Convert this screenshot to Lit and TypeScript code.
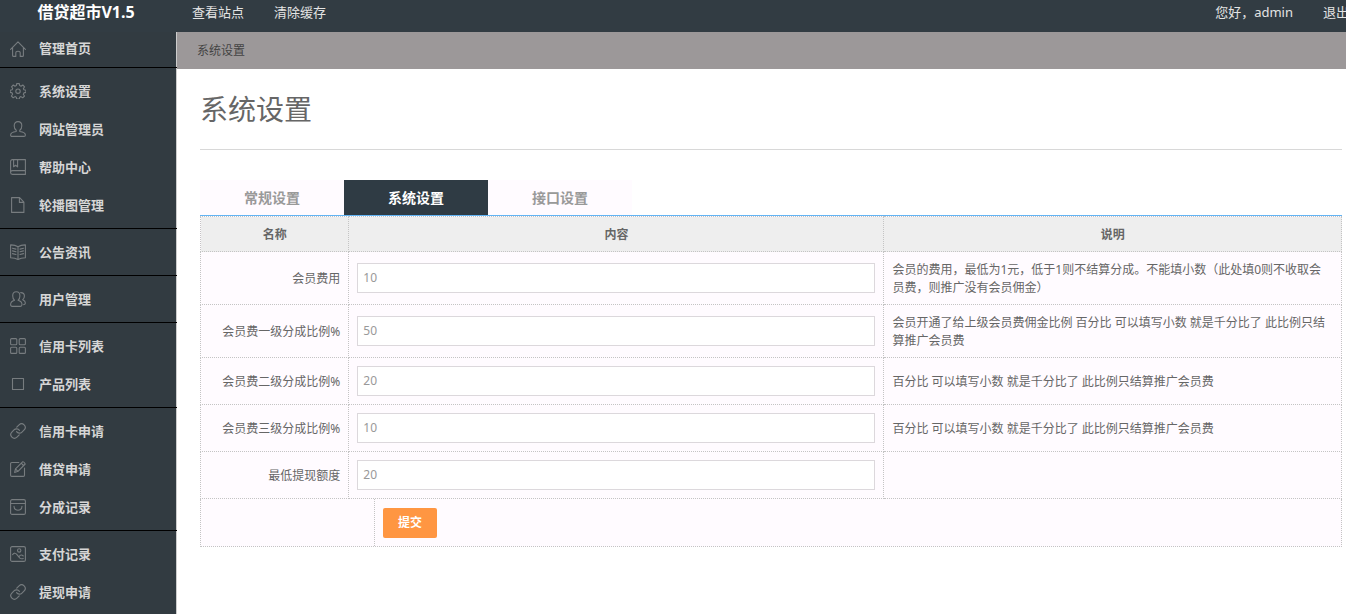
import { LitElement, html, svg, css, nothing } from "lit";
import { customElement, property } from "lit/decorators.js";
import { classMap } from "lit/directives/class-map.js";

const icons: Record<string, unknown> = {
  home: svg`<path d="M.6 8.4 8 .8l7.4 7.6M2.6 6.6v7.8q0 1 1 1h2.200v-3.600q0-1.600 2.200-1.600t2.200 1.600v3.600h2.200q1 0 1-1V6.600"/>`,
  gear: svg`<path d="M6.7.6h2.600l.4 2 1.300.6 1.800-1.200 1.800 1.800-1.200 1.800.5 1.200 2 .4v2.200l-2 .5-.6 1.300 1.200 1.800-1.800 1.800-1.800-1.200-1.200.6-.4 1.900H6.700l-.4-1.900-1.300-.6-1.800 1.200L1.400 13l1.200-1.800-.5-1.300-1.900-.5V7.200l1.900-.4.6-1.300-1.200-1.700 1.800-1.800L5 3.200l1.300-.6z"/><circle cx="8" cy="8.200" r="2.200"/>`,
  user: svg`<path d="M6.200 9.300C4.600 8.200 4.200 6.600 4.200 4.700 4.200 2.200 5.800.6 8 .6s3.800 1.600 3.800 4.100c0 1.900-.4 3.500-2 4.600v1.200c3.400.5 5.600 1.500 5.600 3.500 0 .9-.5 1.400-1.400 1.400H2c-.9 0-1.400-.5-1.400-1.400 0-2 2.200-3 5.600-3.500z"/>`,
  book: svg`<path d="M15.400.6H2.500Q.6.600.6 2.500v11q0 1.900 1.900 1.900h12.900zM.8 12.500q.5-.9 1.700-.9h12.900M3.600.8v7l2-1.600 2 1.600v-7"/>`,
  file: svg`<path d="M1.600.6h8l4.300 4.500v10.300H1.600zM9.400.8v4.600h4.300"/>`,
  news: svg`<path d="M8 2.800Q5 .8.600.9v12.800q4.400 0 7.400 1.800 3-1.800 7.400-1.800V.9Q11 .8 8 2.800zM8 2.800v12.500M2.500 4.200l3.500.9M2.500 6.900l3.500.9M2.500 9.600l3.500.9M13.500 4.200l-3.500.9M13.500 6.900l-3.500.9M13.500 9.600l-3.500.9"/>`,
  users: svg`<path d="M4.500 9.300C3 8.200 2.700 6.500 2.700 4.700 2.700 2.300 4.200.7 6.300.7s3.600 1.600 3.600 4c0 1.800-.3 3.500-1.800 4.600 2.700.8 3.900 2 3.900 4.300 0 1.100-.6 1.800-1.600 1.800H2.200C1.200 15.400.6 14.700.6 13.600c0-2.300 1.200-3.500 3.900-4.300zM10.700 1.600c2.400 0 3.700 1.300 3.700 3.400 0 1.700-.5 2.900-1.700 3.700 1.900.8 2.700 2 2.700 3.400 0 1-.6 1.500-1.700 1.500"/>`,
  grid: svg`<rect x=".6" y=".6" width="6.200" height="6.200" rx="1"/><rect x="9.200" y=".6" width="6.200" height="6.200" rx="1"/><rect x=".6" y="9.200" width="6.200" height="6.200" rx="1"/><rect x="9.200" y="9.200" width="6.200" height="6.200" rx="1"/>`,
  square: svg`<rect x="2.500" y="2.500" width="11" height="11"/>`,
  link: svg`<g transform="translate(-.64 -.64) scale(.72)" stroke-width="1.600"><path d="M10 13a5 5 0 0 0 7.540.54l3-3a5 5 0 0 0-7.070-7.070l-3.200 3.200"/><path d="M14 11a5 5 0 0 0-7.540-.54l-3 3a5 5 0 0 0 7.070 7.070l3.200-3.200"/></g>`,
  edit: svg`<path d="M8.800 1.500H1.800Q.6 1.500.6 2.700v11.500q0 1.200 1.200 1.200h11.500q1.200 0 1.200-1.200V7M4.600 11.400l.9-3.500L12.600.8q1.400-.5 2.600 2.200L8 10.300zM11.200 2.200l2.300 2.300M5.500 8l2.500 2.300"/>`,
  bag: svg`<rect x=".6" y=".6" width="14.800" height="14.800" rx="1.500"/><path d="M.8 4.500h14.400M4 7.200q.2 4 4 4t4-4"/>`,
  image: svg`<rect x=".6" y=".6" width="14.800" height="14.800" rx="1.500"/><circle cx="9.200" cy="4.400" r="1.700"/><path d="M2.600 8.600Q4.800 5.700 7 8.700l2.600 3.100q1.800 1.600 3.600.6M9.200 10.300Q11 8 13.300 10"/>`,
};

const groups: [string, string][][] = [
  [["home", "管理首页"]],
  [["gear", "系统设置"], ["user", "网站管理员"], ["book", "帮助中心"], ["file", "轮播图管理"]],
  [["news", "公告资讯"]],
  [["users", "用户管理"]],
  [["grid", "信用卡列表"], ["square", "产品列表"]],
  [["link", "信用卡申请"], ["edit", "借贷申请"], ["bag", "分成记录"]],
  [["image", "支付记录"], ["link", "提现申请"]],
];

const shareNote = "百分比 可以填写小数 就是千分比了 此比例只结算推广会员费";

const settings = [
  { id: "fee", label: "会员费用", value: "10", note: "会员的费用，最低为1元，低于1则不结算分成。不能填小数（此处填0则不收取会员费，则推广没有会员佣金）" },
  { id: "level1", label: "会员费一级分成比例%", value: "50", note: "会员开通了给上级会员费佣金比例 百分比 可以填写小数 就是千分比了 此比例只结算推广会员费" },
  { id: "level2", label: "会员费二级分成比例%", value: "20", note: shareNote },
  { id: "level3", label: "会员费三级分成比例%", value: "10", note: shareNote },
  { id: "withdraw", label: "最低提现额度", value: "20", note: "" },
];

const base = css`
  *, *::before, *::after { box-sizing: border-box; }
  a { color: inherit; text-decoration: none; }
  ul { list-style: none; margin: 0; padding: 0; }
`;

@customElement("side-menu")
class SideMenu extends LitElement {
  static styles = [base, css`
    :host { display: block; background: #323b41; border-right: 1px solid #ccc; color: #d6d6d6; }
    .group { position: relative; margin-right: -1px; padding: 4px 0; border-bottom: 1px solid #000; }
    .group:first-child { padding: 0; }
    .group:last-child { padding-bottom: 0; border-bottom: 0; }
    .item { display: flex; align-items: center; gap: 13px; height: 38px; padding-left: 10px; font-size: 13px; font-weight: 700; white-space: nowrap; }
    .group:first-child .item { height: 35px; padding-bottom: 2px; }
    .label { padding-bottom: 2px; }
    .icon { width: 16px; height: 16px; fill: none; stroke: #777c7f; stroke-width: 1.1; stroke-linejoin: round; stroke-linecap: round; }
  `];

  render() {
    return html`<nav aria-label="管理">
      ${groups.map((group) => html`<ul class="group">
        ${group.map(([icon, label]) => html`<li>
          <a class="item" href="#"><svg class="icon" viewBox="0 0 16 16" aria-hidden="true">${icons[icon]}</svg><span class="label">${label}</span></a>
        </li>`)}
      </ul>`)}
    </nav>`;
  }
}

@customElement("settings-form")
class SettingsForm extends LitElement {
  static styles = [base, css`
    :host { display: block; font-size: 12px; line-height: 18px; color: #666; }
    .table { width: 100%; border-collapse: collapse; table-layout: fixed; background: #fffbff; }
    .name { width: 13%; }
    .content { width: 46.9%; }
    th, td { padding: 8px; border: 1px dotted #c4c4c4; }
    th, .note { padding: 9px 8px 7px; }
    thead th { background: #eee; text-align: center; font-weight: 700; }
    tbody th { text-align: right; font-weight: 400; }
    .field { display: block; width: 100%; height: 30px; padding: 0 5px 2px; border: 1px solid #dcd8dc; background: #fff; font: inherit; color: #999; outline: 0; }
    .actions { display: flex; background: #fffbff; border: 1px dotted #c4c4c4; border-top: 0; }
    .spacer { width: 174px; border-right: 1px dotted #c4c4c4; }
    .cell { padding: 9px 8px 8px; }
    .submit { display: block; width: 54px; height: 30px; padding: 0; border: 0; border-radius: 2px; background: #ff9642; color: #fff; font: inherit; font-weight: 700; }
  `];

  render() {
    return html`<form @submit=${(e: Event) => e.preventDefault()}>
      <table class="table">
        <thead>
          <tr><th class="name" scope="col">名称</th><th class="content" scope="col">内容</th><th scope="col">说明</th></tr>
        </thead>
        <tbody>
          ${settings.map((s) => html`<tr>
            <th scope="row"><label for=${s.id}>${s.label}</label></th>
            <td><input class="field" id=${s.id} type="text" .value=${s.value} /></td>
            <td class="note">${s.note || nothing}</td>
          </tr>`)}
        </tbody>
      </table>
      <div class="actions">
        <div class="spacer"></div>
        <div class="cell"><button class="submit" type="submit">提交</button></div>
      </div>
    </form>`;
  }
}

@customElement("app-root")
class AppRoot extends LitElement {
  @property() tab = "系统设置";

  static styles = [base, css`
    :host { display: flex; flex-direction: column; min-height: 100vh; background: #fff; font-family: "Noto Sans", "Noto Sans CJK SC", sans-serif; color: #666; }
    .top { display: flex; height: 32px; padding-bottom: 8px; overflow: hidden; background: #323c43; color: #e4e4e4; font-size: 13px; line-height: 24px; white-space: nowrap; }
    .brand { width: 177px; padding-right: 5px; text-align: center; font-size: 16px; font-weight: 700; color: #fff; }
    .links { display: flex; }
    .links li { padding: 0 15px; }
    .account { margin-left: auto; margin-right: -18px; }
    .body { display: flex; flex: 1; }
    .side { flex: none; width: 177px; }
    .main { flex: 1; min-width: 0; }
    .crumb { height: 37px; padding-left: 20px; background: #9c9899; color: #444; font-size: 12px; line-height: 37px; }
    .page { padding: 20px 4px 20px 23px; }
    .title { margin: 0 0 30px; padding-bottom: 20px; border-bottom: 1px solid #d8d8d8; font-size: 28px; font-weight: 400; line-height: 40px; }
    .tabs { display: flex; border-bottom: 1px solid #62b4f4; }
    .tab { display: block; width: 144px; background: #fffbff; color: #999; font-size: 14px; font-weight: 700; line-height: 35px; text-align: center; }
    .tab.active { background: #2f3b44; color: #fff; }
  `];

  render() {
    return html`
      <header class="top">
        <a class="brand" href="#">借贷超市V1.5</a>
        <ul class="links"><li><a href="#">查看站点</a></li><li><a href="#">清除缓存</a></li></ul>
        <ul class="links account"><li>您好，admin</li><li><a href="#">退出</a></li></ul>
      </header>
      <div class="body">
        <side-menu class="side"></side-menu>
        <main class="main">
          <div class="crumb">系统设置</div>
          <div class="page">
            <h1 class="title">系统设置</h1>
            <nav class="tabs">
              ${["常规设置", "系统设置", "接口设置"].map((t) => html`<a
                class=${classMap({ tab: true, active: t === this.tab })}
                href="#"
                @click=${(e: Event) => { e.preventDefault(); this.tab = t; }}>${t}</a>`)}
            </nav>
            <settings-form></settings-form>
          </div>
        </main>
      </div>`;
  }
}
